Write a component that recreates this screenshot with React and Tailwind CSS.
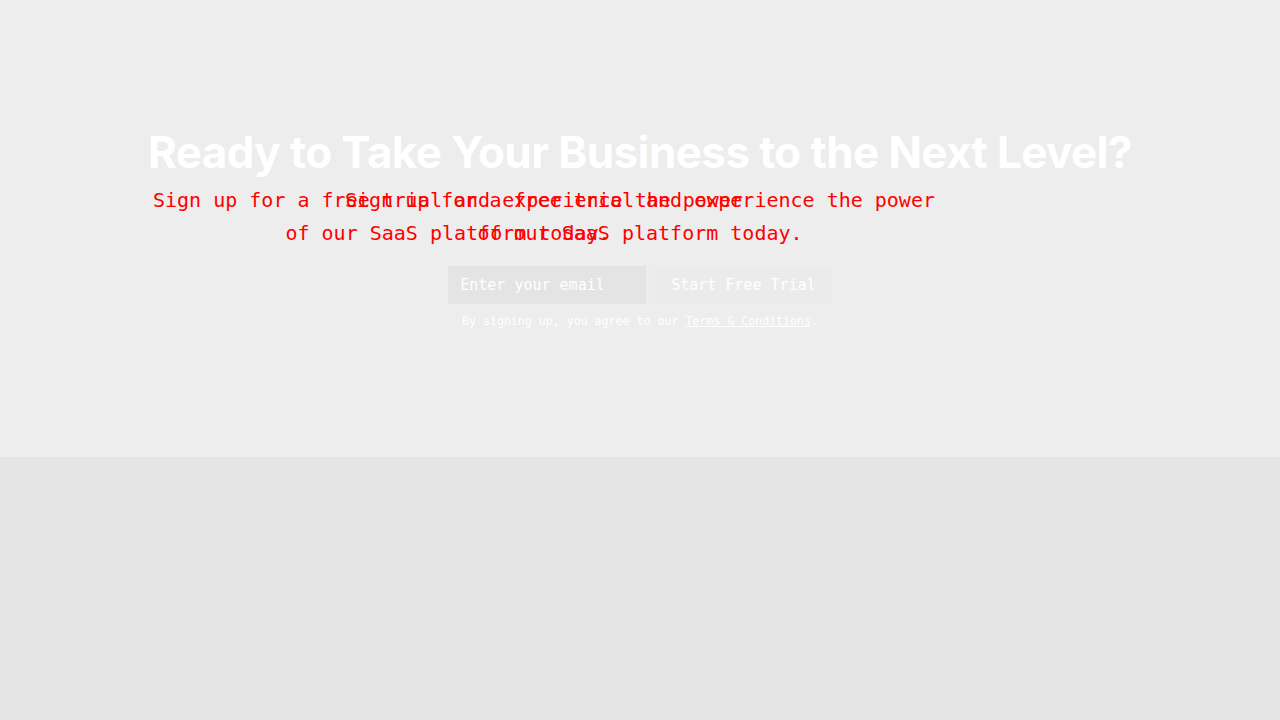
import React from "react";

const para = "Sign up for a free trial and experience the power of our SaaS platform today.";

export default function App() {
  return (
    <div className="min-h-[720px] w-full bg-[#e5e5e5]">
      <section className="flex h-[457px] w-full flex-col items-center justify-center bg-[#ededed] font-['DejaVu_Sans_Mono','Liberation_Mono',monospace]">
        <h2 className="text-center font-['Inter','Liberation_Sans',sans-serif] text-[44px] font-bold leading-[48px] tracking-[-0.6px] text-white">
          Ready to Take Your Business to the Next Level?
        </h2>
        <div className="mt-[8px] grid text-center text-[20px] leading-[33px] text-[#ff0000]">
          <p className="col-start-1 row-start-1 w-[612px]">{para}</p>
          <p className="col-start-1 row-start-1 w-[612px] -translate-x-[192px]">{para}</p>
        </div>
        <form className="mt-[16px] flex items-center gap-[9px]" onSubmit={(e) => e.preventDefault()}>
          <input
            type="email"
            placeholder="Enter your email"
            className="h-[38px] w-[198px] bg-[#e4e4e4] px-3 font-['DejaVu_Sans_Mono','Liberation_Mono',monospace] text-[15px] text-white outline-none placeholder:text-white"
          />
          <button
            type="submit"
            className="h-[38px] bg-[#ebebeb] px-4 font-['DejaVu_Sans_Mono','Liberation_Mono',monospace] text-[15px] text-white"
          >
            Start Free Trial
          </button>
        </form>
        <p className="mt-[9px] text-[11.6px] leading-[16px] text-white">
          By signing up, you agree to our <a href="#" className="underline">Terms &amp; Conditions</a>.
        </p>
      </section>
    </div>
  );
}
